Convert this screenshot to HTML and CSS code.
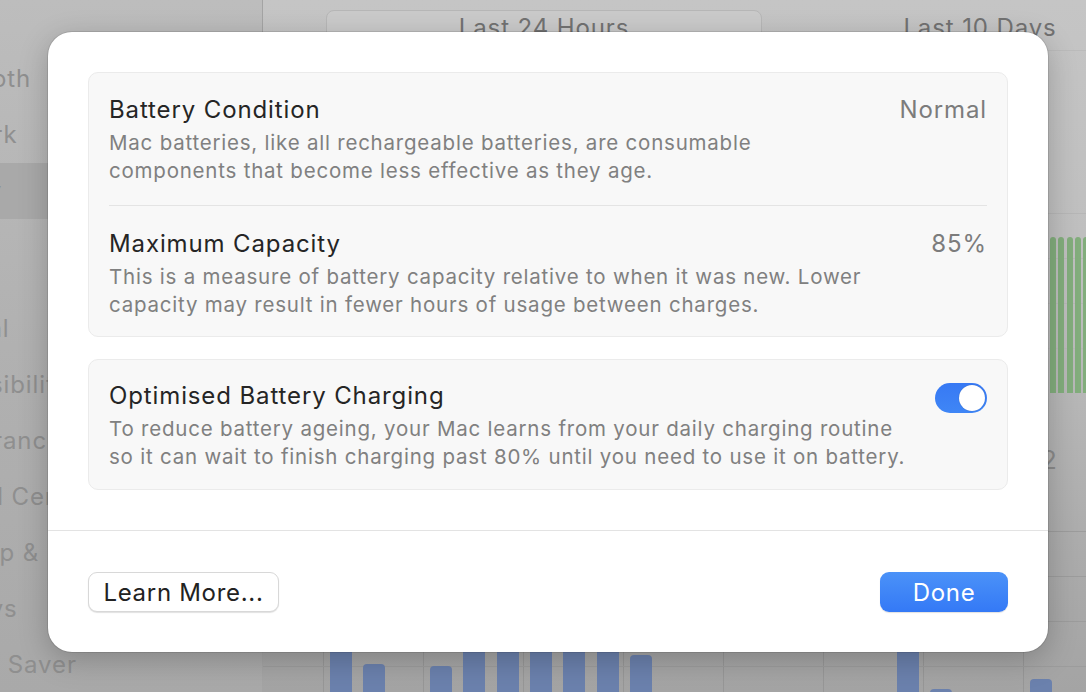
FILE: index.html
```html
<!DOCTYPE html>
<html lang="en">
<head>
<meta charset="utf-8">
<title>Battery Health</title>
<link rel="stylesheet" href="styles.css">
</head>
<body>
<div class="app">
  <aside class="sidebar">
    <div class="side-item">Bluetooth</div>
    <div class="side-item">Network</div>
    <div class="side-item selected">Battery</div>
    <div class="side-item">VPN</div>
    <div class="side-gap"></div>
    <div class="side-item">General</div>
    <div class="side-item">Accessibility</div>
    <div class="side-item">Appearance</div>
    <div class="side-item">Control Centre</div>
    <div class="side-item">Desktop &amp; Dock</div>
    <div class="side-item">Displays</div>
    <div class="side-item">Screen Saver</div>
  </aside>
  <main class="content">
    <div class="segmented">
      <div class="seg active">Last 24 Hours</div>
      <div class="seg">Last 10 Days</div>
    </div>
    <div class="chart-top">
      <div class="green-bars">
        <span></span><span></span><span></span><span></span><span></span>
      </div>
    </div>
    <div class="axis-label">2</div>
    <div class="chart-bottom">
      <div class="blue-bars">
        <span style="height:105px"></span>
        <span style="height:61px"></span>
        <span style="height:0"></span>
        <span style="height:59px"></span>
        <span style="height:105px"></span>
        <span style="height:105px"></span>
        <span style="height:105px"></span>
        <span style="height:105px"></span>
        <span style="height:105px"></span>
        <span style="height:70px"></span>
        <span style="height:0"></span>
        <span style="height:0"></span>
        <span style="height:0"></span>
        <span style="height:0"></span>
        <span style="height:0"></span>
        <span style="height:0"></span>
        <span style="height:0"></span>
        <span style="height:105px"></span>
        <span style="height:36px"></span>
        <span style="height:0"></span>
        <span style="height:0"></span>
        <span style="height:46px"></span>
      </div>
    </div>
  </main>
</div>

<div class="modal">
  <div class="modal-body">
    <section class="group">
      <div class="row first">
        <div class="row-head">
          <span class="row-title">Battery Condition</span>
          <span class="row-value">Normal</span>
        </div>
        <p class="row-desc">Mac batteries, like all rechargeable batteries, are consumable<br>components that become less effective as they age.</p>
      </div>
      <div class="row second">
        <div class="row-head">
          <span class="row-title">Maximum Capacity</span>
          <span class="row-value">85%</span>
        </div>
        <p class="row-desc">This is a measure of battery capacity relative to when it was new. Lower<br>capacity may result in fewer hours of usage between charges.</p>
      </div>
    </section>
    <section class="group">
      <div class="row single">
        <div class="row-head">
          <span class="row-title">Optimised Battery Charging</span>
          <span class="toggle on"><span class="knob"></span></span>
        </div>
        <p class="row-desc">To reduce battery ageing, your Mac learns from your daily charging routine<br>so it can wait to finish charging past 80% until you need to use it on battery.</p>
      </div>
    </section>
  </div>
  <div class="modal-footer">
    <button class="btn secondary">Learn More...</button>
    <button class="btn primary">Done</button>
  </div>
</div>
</body>
</html>
```

FILE: styles.css
```css
html, body {
  margin: 0;
  padding: 0;
  width: 1086px;
  height: 692px;
  overflow: hidden;
}

body {
  font-family: Inter, "Liberation Sans", sans-serif;
  position: relative;
  background: #b0b0b0;
}

.app {
  display: flex;
  height: 692px;
}

/* ---------- sidebar (dimmed) ---------- */
.sidebar {
  width: 263px;
  flex: none;
  box-sizing: border-box;
  padding-top: 51px;
  background: linear-gradient(180deg, #bdbdbd 0%, #b1b1b1 50%, #a9a9a9 100%);
  border-right: 1px solid #a4a4a4;
  overflow: hidden;
}

.side-item {
  height: 56px;
  line-height: 56px;
  font-size: 24px;
  letter-spacing: 0.88px;
  color: #8f8f8f;
  white-space: nowrap;
  text-indent: -85px;
}

.side-item.selected {
  background: #a9a9a9;
  color: #868686;
}

.side-gap {
  height: 26px;
}

/* ---------- content (dimmed) ---------- */
.content {
  flex: 1;
  min-width: 0;
  overflow: hidden;
  background: linear-gradient(180deg, #c5c5c5 0%, #bdbdbd 45%, #ababab 80%, #a4a4a4 100%);
}

.segmented {
  display: flex;
  margin: 10px 0 0 63px;
  height: 40px;
  border-bottom: 1px solid #bbbbbb;
  width: 900px;
}

.seg {
  width: 436px;
  flex: none;
  height: 36px;
  line-height: 36px;
  text-align: center;
  font-size: 24px;
  letter-spacing: 0.88px;
  color: #727272;
  box-sizing: border-box;
}

.seg.active {
  background: #cacaca;
  border: 1px solid #b7b7b7;
  border-radius: 8px;
  line-height: 34px;
}

.chart-top {
  margin-top: 162px;
  height: 180px;
  background: repeating-linear-gradient(180deg, #b6b6b6 0, #b6b6b6 1px, transparent 1px, transparent 45px);
  display: flex;
  align-items: flex-end;
  padding-left: 787px;
}

.green-bars {
  display: flex;
  gap: 2.3px;
  height: 156px;
  align-items: flex-end;
}

.green-bars span {
  width: 6px;
  height: 156px;
  background: #82ad7c;
  border-radius: 3px 3px 0 0;
  flex: none;
}

.axis-label {
  margin-top: 52px;
  padding-left: 778px;
  font-size: 26px;
  line-height: 30px;
  color: #8a8a8a;
}

.chart-bottom {
  margin-top: 56px;
  height: 200px;
  background:
    repeating-linear-gradient(180deg, #9c9c9c 0, #9c9c9c 1px, transparent 1px, transparent 45px),
    repeating-linear-gradient(90deg, transparent 0, transparent 60px, #979797 60px, #979797 61px, transparent 61px, transparent 100px);
  padding-left: 67px;
  box-sizing: border-box;
  display: flex;
  align-items: flex-end;
}

.blue-bars {
  display: flex;
  align-items: flex-end;
  gap: 11.33px;
  height: 200px;
  padding-bottom: 6px;
  box-sizing: border-box;
}

.blue-bars span {
  width: 22px;
  flex: none;
  background: #6b81ad;
  border-radius: 4px 4px 0 0;
}

/* ---------- modal ---------- */
.modal {
  position: absolute;
  left: 48px;
  top: 32px;
  width: 1000px;
  height: 620px;
  background: #ffffff;
  border-radius: 24px;
  box-shadow: 0 0 0 1px rgba(0, 0, 0, 0.10), 0 8px 30px rgba(0, 0, 0, 0.22);
  display: flex;
  flex-direction: column;
  box-sizing: border-box;
}

.modal-body {
  padding: 40px 40px 40px;
  display: flex;
  flex-direction: column;
  gap: 22px;
  border-bottom: 1px solid #e3e3e3;
}

.group {
  background: #f8f8f8;
  border: 1px solid #ebebeb;
  border-radius: 10px;
}

.row.first {
  padding: 23px 20px 0;
}

.row.first .row-desc {
  padding-bottom: 20px;
  border-bottom: 1px solid #e4e4e4;
}

.row.second {
  padding: 24px 20px 17px;
}

.row.single {
  padding: 22px 20px 18px;
}

.row-head {
  display: flex;
  align-items: center;
  justify-content: space-between;
  height: 28px;
}

.row-title {
  font-size: 24px;
  letter-spacing: 0.88px;
  line-height: 28px;
  color: #252525;
}

.row-value {
  font-size: 24px;
  letter-spacing: 0.88px;
  line-height: 28px;
  color: #7c7c7c;
}

.row-desc {
  margin: 5px 0 0;
  font-size: 20.5px;
  letter-spacing: 0.78px;
  line-height: 28px;
  color: #808080;
}

.toggle {
  width: 52px;
  height: 30px;
  border-radius: 15px;
  background: linear-gradient(180deg, #3779f4 0%, #3f86f6 100%);
  display: flex;
  align-items: center;
  justify-content: flex-end;
  padding: 0 2px;
  box-sizing: border-box;
  margin-top: 4px;
}

.knob {
  width: 26px;
  height: 26px;
  border-radius: 50%;
  background: #ffffff;
  box-shadow: 0 0 1px rgba(0, 0, 0, 0.3);
}

.modal-footer {
  flex: 1;
  display: flex;
  align-items: flex-start;
  justify-content: space-between;
  padding: 41px 40px 0;
}

.btn {
  height: 40px;
  border-radius: 9px;
  font-family: Inter, "Liberation Sans", sans-serif;
  font-size: 24px;
  letter-spacing: 0.7px;
  padding: 0;
  cursor: default;
}

.btn.secondary {
  width: 191px;
  background: #ffffff;
  color: #222222;
  border: 1px solid #d8d8d8;
  box-shadow: 0 1px 1px rgba(0, 0, 0, 0.12);
}

.btn.primary {
  width: 128px;
  background: linear-gradient(180deg, #4b92f8 0%, #3479f6 100%);
  color: #ffffff;
  border: none;
  box-shadow: 0 1px 1px rgba(0, 0, 0, 0.12);
}
```
